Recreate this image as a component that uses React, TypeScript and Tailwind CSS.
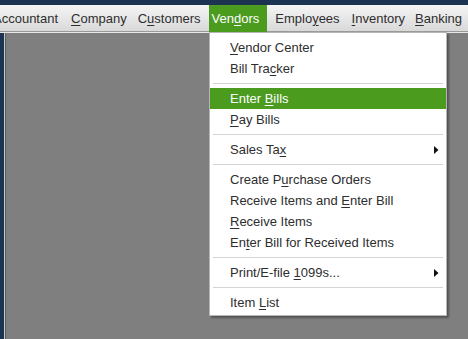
import type { ReactNode } from 'react'

type Entry =
  | { kind: 'item'; pre: string; key: string; post: string; active?: boolean; sub?: boolean }
  | { kind: 'sep' }

const MENU: Entry[] = [
  { kind: 'item', pre: '', key: 'V', post: 'endor Center' },
  { kind: 'item', pre: 'Bill Tra', key: 'c', post: 'ker' },
  { kind: 'sep' },
  { kind: 'item', pre: 'Enter ', key: 'B', post: 'ills', active: true },
  { kind: 'item', pre: '', key: 'P', post: 'ay Bills' },
  { kind: 'sep' },
  { kind: 'item', pre: 'Sales Ta', key: 'x', post: '', sub: true },
  { kind: 'sep' },
  { kind: 'item', pre: 'Create P', key: 'u', post: 'rchase Orders' },
  { kind: 'item', pre: 'Receive Items and ', key: 'E', post: 'nter Bill' },
  { kind: 'item', pre: '', key: 'R', post: 'eceive Items' },
  { kind: 'item', pre: 'En', key: 't', post: 'er Bill for Received Items' },
  { kind: 'sep' },
  { kind: 'item', pre: 'Print/E-file ', key: '1', post: '099s...', sub: true },
  { kind: 'sep' },
  { kind: 'item', pre: 'Item ', key: 'L', post: 'ist' },
]

function Mn({ pre, k, post }: { pre: string; k: string; post: string }) {
  return (
    <>
      {pre}
      <span className="underline underline-offset-2">{k}</span>
      {post}
    </>
  )
}

function BarItem({ children, className = '' }: { children: ReactNode; className?: string }) {
  return <div className={`flex items-center pt-[1px] whitespace-nowrap ${className}`}>{children}</div>
}

export default function App() {
  return (
    <div
      className="relative w-[468px] h-[339px] overflow-hidden bg-[#7f7f7f] text-[13px] text-[#2e2e2e]"
      style={{ fontFamily: '"Liberation Sans", Arial, sans-serif' }}
    >
      <div className="h-[5px] bg-[#1c3352]" />

      {/* menu bar */}
      <div className="flex h-[27px] bg-gradient-to-b from-[#f5f5f5] to-[#d9d9d9] border-b border-[#9a9a9a]">
        <BarItem className="ml-[-7px]">Accountant</BarItem>
        <BarItem className="ml-[13px]"><Mn pre="" k="C" post="ompany" /></BarItem>
        <BarItem className="ml-[11px]"><Mn pre="C" k="u" post="stomers" /></BarItem>
        <BarItem className="ml-[8px] pl-[3px] pr-[8px] mb-[-1px] bg-[#4b9b1f] text-white">
          <Mn pre="Ven" k="d" post="ors" />
        </BarItem>
        <BarItem className="ml-[8px]"><Mn pre="Emplo" k="y" post="ees" /></BarItem>
        <BarItem className="ml-[12px]"><Mn pre="" k="I" post="nventory" /></BarItem>
        <BarItem className="ml-[10px]"><Mn pre="" k="B" post="anking" /></BarItem>
      </div>

      {/* workspace */}
      <div className="flex h-full border-t border-[#e8e8e8]">
        <div className="w-[4px] bg-[#1c3352]" />
        <div className="w-[1px] bg-[#c8c8c8]" />
        <div className="w-[1px] bg-[#5e5e5e]" />
        <div className="flex-1 bg-[#7f7f7f]" />
      </div>

      {/* dropdown */}
      <div className="absolute left-[209px] top-[32px] w-[238px] bg-white border border-[#b5b5b5] pt-[4px] pb-[2px] shadow-[2px_2px_2px_rgba(0,0,0,0.35)]">
        {MENU.map((e, i) =>
          e.kind === 'sep' ? (
            <div key={i} className="py-[4px] pl-[3px] pr-[3px]">
              <div className="h-[1px] bg-[#d4d4d4]" />
            </div>
          ) : (
            <div
              key={i}
              className={`flex items-center justify-between h-[21px] pl-[20px] pr-[7px] whitespace-nowrap ${
                e.active ? 'bg-[#4b9b1f] text-white' : ''
              }`}
            >
              <span>
                <Mn pre={e.pre} k={e.key} post={e.post} />
              </span>
              {e.sub && (
                <svg width="5" height="8" viewBox="0 0 5 8">
                  <path d="M0 0 L4.5 4 L0 8 Z" fill="#111" />
                </svg>
              )}
            </div>
          )
        )}
      </div>
    </div>
  )
}
